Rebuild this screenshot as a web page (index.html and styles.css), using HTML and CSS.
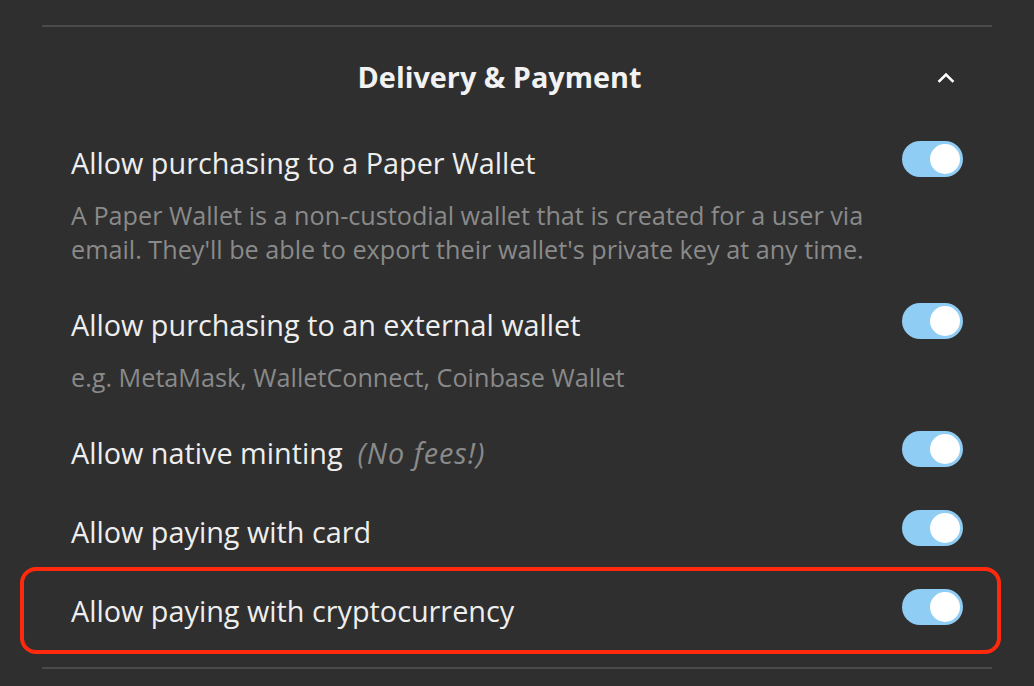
FILE: index.html
```html
<!DOCTYPE html>
<html lang="en">
<head>
  <meta charset="UTF-8">
  <meta name="viewport" content="width=device-width, initial-scale=1.0">
  <title>Delivery &amp; Payment</title>
  <link rel="stylesheet" href="styles.css">
</head>
<body>

  <div class="section">
    <div class="section-header">
      <h2 class="section-title">Delivery &amp; Payment</h2>
      <button class="collapse-btn" type="button" aria-label="Collapse">
        <svg width="18" height="11" viewBox="0 0 18 11">
          <polyline points="2.5,9 9,2.5 15.5,9" fill="none" stroke="#ffffff" stroke-width="2.6" stroke-linecap="square"/>
        </svg>
      </button>
    </div>

    <div class="setting">
      <div class="setting-head">
        <span class="setting-label">Allow purchasing to a Paper Wallet</span>
        <span class="toggle on"><span class="knob"></span></span>
      </div>
      <p class="setting-desc">A Paper Wallet is a non-custodial wallet that is created for a user via email. They'll be able to export their wallet's private key at any time.</p>
    </div>

    <div class="setting">
      <div class="setting-head">
        <span class="setting-label">Allow purchasing to an external wallet</span>
        <span class="toggle on"><span class="knob"></span></span>
      </div>
      <p class="setting-desc">e.g. MetaMask, WalletConnect, Coinbase Wallet</p>
    </div>

    <div class="setting">
      <div class="setting-head">
        <span class="setting-label">Allow native minting<em class="note">(No fees!)</em></span>
        <span class="toggle on"><span class="knob"></span></span>
      </div>
    </div>

    <div class="setting">
      <div class="setting-head">
        <span class="setting-label">Allow paying with card</span>
        <span class="toggle on"><span class="knob"></span></span>
      </div>
    </div>

    <div class="setting highlighted">
      <div class="setting-head">
        <span class="setting-label">Allow paying with cryptocurrency</span>
        <span class="toggle on"><span class="knob"></span></span>
      </div>
    </div>
  </div>

</body>
</html>
```

FILE: styles.css
```css
body {
  font-family: "Open Sans", "Liberation Sans", sans-serif;
  margin: 0;
  padding: 25px 0 0;
  background-color: #2f2f2f;
  color: #eeeeee;
}

.section {
  margin: 0 42px;
  padding: 0 29px 19px;
  border-top: 2px solid #4b4b4b;
  border-bottom: 2px solid #4b4b4b;
}

.section-header {
  display: flex;
  align-items: center;
  padding: 32px 0 26px;
}

.section-title {
  flex: 1;
  margin: 0;
  text-align: center;
  font-size: 28.8px;
  line-height: 36px;
  font-weight: 700;
  color: #f2f2f2;
}

.collapse-btn {
  width: 35px;
  height: 36px;
  padding: 0;
  border: none;
  background: none;
  display: flex;
  align-items: center;
  justify-content: center;
  cursor: pointer;
}

.setting {
  position: relative;
  padding: 20px 0 19px;
}

.setting-head {
  display: flex;
  justify-content: space-between;
  align-items: flex-start;
}

.setting-label {
  padding-top: 4px;
  font-size: 28.8px;
  line-height: 36px;
  color: #eeeeee;
}

.note {
  margin-left: 15px;
  letter-spacing: 1px;
  color: #8a8a8a;
}

.setting-desc {
  margin: 17px 0 -2px;
  padding-right: 80px;
  font-size: 25.2px;
  line-height: 34px;
  color: #8a8a8a;
}

.toggle {
  position: relative;
  width: 61px;
  height: 36px;
  border-radius: 18px;
  background-color: #90cdf4;
  flex-shrink: 0;
}

.knob {
  position: absolute;
  top: 3px;
  right: 3px;
  width: 30px;
  height: 30px;
  border-radius: 50%;
  background-color: #ffffff;
}

.highlighted::after {
  content: "";
  position: absolute;
  top: -2px;
  bottom: -6px;
  left: -51px;
  right: -38px;
  border: 4px solid #ff2a0d;
  border-radius: 16px;
  pointer-events: none;
}
```
